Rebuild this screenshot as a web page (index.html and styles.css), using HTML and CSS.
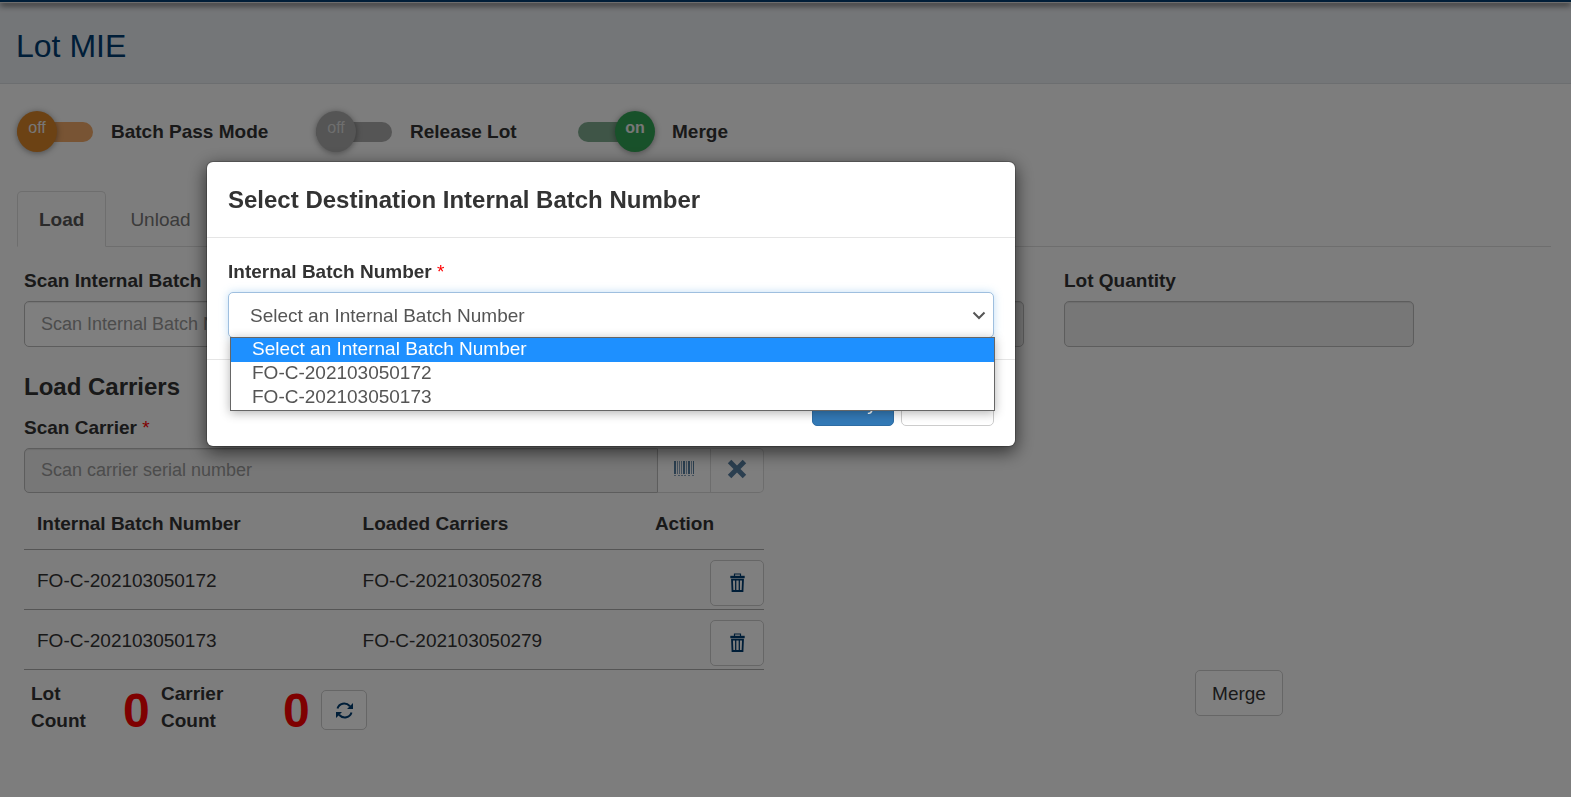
FILE: index.html
```html
<!DOCTYPE html>
<html lang="en">
<head>
<meta charset="utf-8">
<title>Lot MIE</title>
<meta name="viewport" content="width=device-width, initial-scale=1">
<link rel="stylesheet" href="styles.css">
</head>
<body>
<div class="top-bar"></div>
<header class="page-header">
  <h1>Lot MIE</h1>
</header>
<main class="content">
  <div class="toggles">
    <label class="toggle">
      <span class="switch"><input type="checkbox" class="track track-orange"><span class="knob knob-orange">off</span></span>
      Batch Pass Mode
    </label>
    <label class="toggle">
      <span class="switch"><input type="checkbox" class="track track-grey" disabled><span class="knob knob-grey">off</span></span>
      Release Lot
    </label>
    <label class="toggle">
      <span class="switch"><input type="checkbox" class="track track-green" checked><span class="knob knob-green">on</span></span>
      Merge
    </label>
  </div>

  <nav class="tabs">
    <a class="tab tab-active" href="#load">Load</a>
    <a class="tab" href="#unload">Unload</a>
  </nav>

  <section class="grid" id="load">
    <div class="field span-4">
      <label for="scan-batch">Scan Internal Batch Number <span class="required">*</span></label>
      <input id="scan-batch" class="control" type="text" placeholder="Scan Internal Batch Number">
    </div>
    <div class="field span-4">
      <label for="part">Part Number</label>
      <input id="part" class="control" type="text" disabled>
    </div>
    <div class="field span-3">
      <label for="quantity">Lot Quantity</label>
      <input id="quantity" class="control" type="text" disabled>
    </div>
  </section>

  <section class="grid carriers">
    <div class="span-6">
      <h2>Load Carriers</h2>
      <div class="field">
        <label for="scan-carrier">Scan Carrier <span class="required">*</span></label>
        <div class="input-group">
          <input id="scan-carrier" class="control" type="text" placeholder="Scan carrier serial number" disabled>
          <button type="button" class="addon" aria-label="Scan barcode" disabled>
            <svg width="20" height="16" viewBox="0 0 20 16" fill="currentColor" aria-hidden="true"><path d="M0 0h2v13H0zM9 0h2v13H9zM14 0h2v13h-2zM19 0h1v13h-1z"/><path opacity=".7" d="M3 0h1v13H3zM5 0h1v13H5zM7 0h1v13H7zM12 0h1v13h-1zM17 0h1v13h-1z"/><path opacity=".7" d="M0 14h2v1H0zM4 14h2v1H4zM7 14h2v1H7zM10 14h2v1h-2zM14 14h2v1h-2zM18 14h2v1h-2z"/></svg>
          </button>
          <button type="button" class="addon" aria-label="Clear" disabled>
            <svg width="20" height="20" viewBox="0 0 20 20" fill="currentColor" aria-hidden="true"><path d="M4.300.8 10 6.500 15.700.8 19.200 4.300 13.500 10l5.700 5.700-3.500 3.500L10 13.500l-5.700 5.700L.8 15.700 6.500 10 .8 4.300z"/></svg>
          </button>
        </div>
      </div>
      <table class="lots">
        <colgroup><col class="col-batch"><col class="col-carrier"><col></colgroup>
        <thead>
          <tr><th>Internal Batch Number</th><th>Loaded Carriers</th><th>Action</th></tr>
        </thead>
        <tbody>
          <tr>
            <td>FO-C-202103050172</td><td>FO-C-202103050278</td>
            <td class="action"><button type="button" class="btn btn-icon" aria-label="Delete"><svg width="15" height="19" viewBox="0 0 15 19" fill="none" stroke="currentColor" aria-hidden="true"><path stroke-width="1.200" d="M4.500 3V1h6v2"/><path stroke-width="2.400" d="M.3 4h14.400"/><path stroke-width="1.800" d="M2 6.600 2.500 18h10L13 6.600z"/><path stroke-width="1.300" d="M5.700 7v11M9.300 7v11"/></svg></button></td>
          </tr>
          <tr>
            <td>FO-C-202103050173</td><td>FO-C-202103050279</td>
            <td class="action"><button type="button" class="btn btn-icon" aria-label="Delete"><svg width="15" height="19" viewBox="0 0 15 19" fill="none" stroke="currentColor" aria-hidden="true"><path stroke-width="1.200" d="M4.500 3V1h6v2"/><path stroke-width="2.400" d="M.3 4h14.400"/><path stroke-width="1.800" d="M2 6.600 2.500 18h10L13 6.600z"/><path stroke-width="1.300" d="M5.700 7v11M9.300 7v11"/></svg></button></td>
          </tr>
        </tbody>
      </table>
      <div class="counts">
        <span class="count-label">Lot Count</span><span class="count-value">0</span>
        <span class="count-label">Carrier Count</span><span class="count-value">0</span>
        <button type="button" class="btn btn-refresh" aria-label="Refresh">
          <svg width="17" height="17" viewBox="0 0 17 17" fill="none" stroke="currentColor" stroke-width="2" aria-hidden="true"><path d="M1.500 6.500C3 1.500 9.500-.5 14 4.300M15.500 10.500C14 15.500 7.500 17.500 3 12.700"/><path fill="currentColor" stroke="none" d="M17 1v6h-6zM0 16v-6h6z"/></svg>
        </button>
      </div>
    </div>
    <div class="merge-cell"><button type="button" class="btn">Merge</button></div>
  </section>
</main>

<div class="backdrop">
  <div class="modal" role="dialog" aria-modal="true" aria-labelledby="modal-title">
    <div class="modal-header"><h2 id="modal-title">Select Destination Internal Batch Number</h2></div>
    <div class="modal-body field">
      <label for="destination">Internal Batch Number <span class="required">*</span></label>
      <div class="select-wrap">
        <select id="destination" class="control select">
          <option>Select an Internal Batch Number</option>
          <option>FO-C-202103050172</option>
          <option>FO-C-202103050173</option>
        </select>
        <svg class="chevron" width="14" height="9" viewBox="0 0 14 9" fill="none" stroke="#555" stroke-width="2" aria-hidden="true"><path d="M1.500 1.500 7 7l5.500-5.500"/></svg>
        <ul class="options" role="listbox" aria-label="Internal Batch Number">
          <li class="option option-active" role="option" aria-selected="true">Select an Internal Batch Number</li>
          <li class="option" role="option">FO-C-202103050172</li>
          <li class="option" role="option">FO-C-202103050173</li>
        </ul>
      </div>
    </div>
    <div class="modal-footer">
      <button type="button" class="btn btn-primary">Verify</button>
      <button type="button" class="btn">Cancel</button>
    </div>
  </div>
</div>
</body>
</html>
```
FILE: styles.css
```css
* { box-sizing: border-box; }

body {
  margin: 0;
  min-height: 100vh;
  background: #fafafa;
  color: #333;
  font: 19px/27px "Liberation Sans", Arial, sans-serif;
}

h1, h2 { margin: 0; }
h2 { font-size: 24px; line-height: 27px; }
button, input, select { font: inherit; color: inherit; }

.top-bar {
  position: relative;
  height: 3px;
  background: #003c71;
  border-bottom: 1px solid #ddd;
  box-shadow: 0 2px 6px rgba(0, 0, 0, .9);
}

.page-header {
  padding: 25px 16px 18px;
  background: #e9ecf0;
  border-bottom: 1px solid #d9dce0;
}
.page-header h1 {
  color: #003c71;
  font-size: 32px;
  font-weight: 400;
  line-height: 37px;
}

.content { padding: 27px 17px 0; }

/* Switches */
.toggles { display: grid; grid-template-columns: 299px 262px auto; }
.toggle { display: flex; align-items: center; gap: 18px; font-weight: 700; }
.switch { position: relative; display: flex; align-items: center; width: 76px; height: 41px; }
.track { appearance: none; width: 76px; height: 20px; margin: 0; border-radius: 10px; }
.track-orange { background: #f0a868; }
.track-grey { background: #aaa; }
.track-green { background: #7fab8f; }
.knob {
  position: absolute;
  top: 0;
  left: 0;
  width: 40px;
  height: 41px;
  border-radius: 50%;
  color: #eee;
  font-size: 16px;
  font-weight: 400;
  line-height: 33px;
  text-align: center;
  box-shadow: 0 1px 6px rgba(0, 0, 0, .4);
}
.knob-orange { background: #d98429; }
.knob-grey { background: #aaa; color: #ddd; }
.knob-green { left: auto; right: -1px; background: #31a354; font-weight: 700; }

/* Tabs */
.tabs { display: flex; height: 56px; margin: 39px 3px 0 0; border-bottom: 1px solid #ddd; }
.tab {
  height: 56px;
  padding: 14px 21px;
  border: 1px solid transparent;
  color: #777;
  text-decoration: none;
}
.tab-active {
  border-color: #ddd #ddd #fafafa;
  border-radius: 5px 5px 0 0;
  color: #555;
  font-weight: 700;
}
.tab + .tab { margin-left: 2px; }

/* Twelve-column layout */
.grid {
  display: grid;
  grid-template-columns: repeat(12, minmax(0, 1fr));
  column-gap: 40px;
  padding: 20px 10px 0 7px;
}
.carriers { padding-top: 26px; }
.span-3 { grid-column: span 3; }
.span-4 { grid-column: span 4; }
.span-6 { grid-column: span 6; }
.merge-cell { grid-column: 10; display: flex; align-items: flex-end; justify-content: center; padding-bottom: 22px; }

.field label { display: block; margin-bottom: 7px; font-weight: 700; }
.required { color: #f00; font-weight: 400; }
.control {
  display: block;
  width: 100%;
  height: 46px;
  padding: 0 16px;
  background: #fff;
  border: 1px solid #bbb;
  border-radius: 5px;
  box-shadow: inset 0 1px 1px rgba(0, 0, 0, .08);
  font-size: 18px;
}
.control:disabled { background: #eee; }
.control::placeholder { color: #999; }

.carriers h2 { margin-bottom: 14px; }
.input-group { display: flex; }
.input-group .control { flex: 1; min-width: 0; height: 45px; border-radius: 5px 0 0 5px; }
.addon {
  display: flex;
  align-items: center;
  justify-content: center;
  width: 53px;
  height: 45px;
  padding: 0 0 3px;
  background: #fff;
  border: 1px solid #ccc;
  border-left-width: 0;
  color: #003c71;
  opacity: .65;
}
.addon:last-child { border-radius: 0 5px 5px 0; }

.lots { width: 100%; margin-top: 5px; border-collapse: separate; border-spacing: 0; table-layout: fixed; }
.col-batch { width: 44%; }
.col-carrier { width: 39.5%; }
.lots th { padding: 12px 13px; border-bottom: 1px solid #aaa; text-align: left; }
.lots td { padding: 2px 13px 0; border-bottom: 1px solid #aaa; }
.lots td.action { padding: 10px 0 3px; }
.action .btn { margin-left: auto; }

.btn {
  display: flex;
  align-items: center;
  justify-content: center;
  height: 46px;
  padding: 0 16px;
  background: #fff;
  border: 1px solid #ccc;
  border-radius: 5px;
  color: #333;
}
.btn-icon { width: 54px; padding: 0 0 2px; color: #003c71; }
.btn-refresh { width: 46px; height: 40px; margin-top: 10px; padding: 0; color: #003c71; }
.btn-primary { background: #337ab7; border-color: #2e6da4; color: #fff; }

.counts {
  display: grid;
  grid-template-columns: 80px 50px 110px 50px 46px;
  align-items: start;
  margin-top: 10px;
  padding-left: 7px;
}
.count-label { width: min-content; font-weight: 700; }
.count-value { margin-top: 4px; padding-left: 12px; color: #f00; font-size: 48px; font-weight: 700; line-height: 54px; }

/* Dialog */
.backdrop {
  position: fixed;
  inset: 0;
  z-index: 10;
  padding-top: 161px;
  background: rgba(0, 0, 0, .5);
}
.modal {
  width: 810px;
  max-width: 100%;
  margin: 0 0 0 206px;
  background: #fff;
  background-clip: padding-box;
  border: 1px solid rgba(0, 0, 0, .2);
  border-radius: 7px;
  box-shadow: 0 5px 18px rgba(0, 0, 0, .6);
}
.modal-header { padding: 24px 21px; border-bottom: 1px solid #e5e5e5; }
.modal-body { padding: 20px 21px 21px; }
.select-wrap { position: relative; }
.select {
  appearance: none;
  padding: 0 21px;
  border-color: #9fbfdf;
  color: #555;
  font-size: 19px;
  box-shadow: 0 0 8px rgba(102, 175, 233, .4);
}
.chevron { position: absolute; top: 19px; right: 8px; }
.options {
  position: absolute;
  top: 45px;
  left: 2px;
  right: -1px;
  margin: 0;
  padding: 0;
  background: #fff;
  border: 1px solid #666;
  box-shadow: 0 2px 10px rgba(0, 0, 0, .3);
  color: #555;
  list-style: none;
}
.option { padding: 0 21px 2px; line-height: 22px; }
.option-active { background: #1e90ff; color: #fff; }
.modal-footer {
  display: flex;
  justify-content: flex-end;
  gap: 7px;
  padding: 20px 21px;
  border-top: 1px solid #e5e5e5;
}
```
